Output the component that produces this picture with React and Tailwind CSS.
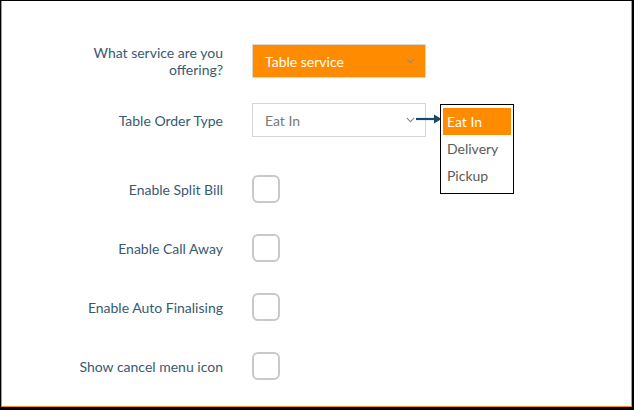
import React from "react";

const labelCls = "text-right text-[14px] leading-[17px] text-[#385a72]";

function Chevron({ color = "#8a8a8a" }) {
  return (
    <svg width="9" height="6" viewBox="0 0 9 6" fill="none">
      <path d="M0.8 0.8 L4.5 4.6 L8.2 0.8" stroke={color} strokeWidth="1.1" />
    </svg>
  );
}

function CheckRow({ label }) {
  return (
    <div className="flex items-center h-[28px]">
      <div className={`w-[221px] ${labelCls}`}>{label}</div>
      <div className="ml-[29px] w-[28px] h-[28px] rounded-[6px] border-2 border-[#c9c9c9] bg-white" />
    </div>
  );
}

export default function App() {
  return (
    <div
      className="w-[634px] h-[410px] bg-black pt-px pl-px pr-[2px] pb-[3px]"
      style={{ fontFamily: "Lato, 'Open Sans', sans-serif" }}
    >
      <div className="relative w-full h-full bg-white border-l border-r border-b border-[#ff8c00]">
        <div className="flex flex-col pt-[43px]">
          <div className="flex items-center h-[34px]">
            <div className={`w-[221px] ${labelCls}`}>
              What service are you
              <br />
              offering?
            </div>
            <div className="ml-[29px] w-[174px] h-[34px] bg-[#ff8c00] border border-[#d9d9d9] flex items-center justify-between pl-[12px] pr-[10px]">
              <span className="text-white text-[14px]">Table service</span>
              <Chevron color="#9a8a7a" />
            </div>
          </div>
          <div className="flex items-center h-[34px] mt-[25px]">
            <div className={`w-[221px] ${labelCls}`}>Table Order Type</div>
            <div className="ml-[29px] w-[174px] h-[34px] bg-white border border-[#d6d6d6] flex items-center justify-between pl-[12px] pr-[10px]">
              <span className="text-[#7a7a7a] text-[14px]">Eat In</span>
              <Chevron />
            </div>
          </div>
          <div className="flex flex-col gap-[31px] mt-[38px]">
            <CheckRow label="Enable Split Bill" />
            <CheckRow label="Enable Call Away" />
            <CheckRow label="Enable Auto Finalising" />
            <CheckRow label="Show cancel menu icon" />
          </div>
        </div>

        <svg className="absolute left-[414px] top-[113px]" width="26" height="10" viewBox="0 0 26 10">
          <line x1="0" y1="5" x2="19" y2="5" stroke="#174a6a" strokeWidth="2.2" />
          <path d="M18 0.5 L25.5 5 L18 9.5 Z" fill="#174a6a" />
        </svg>

        <div className="absolute left-[438px] top-[103px] w-[74px] h-[90px] border border-black bg-white pl-[2px] pr-[2px] pt-[3px] flex flex-col">
          <div className="h-[27px] bg-[#ff8c00] text-white text-[14px] flex items-center pl-[4px]">Eat In</div>
          <div className="h-[27px] text-[#5a5a5a] text-[14px] flex items-center pl-[4px]">Delivery</div>
          <div className="h-[27px] text-[#5a5a5a] text-[14px] flex items-center pl-[4px]">Pickup</div>
        </div>
      </div>
    </div>
  );
}
